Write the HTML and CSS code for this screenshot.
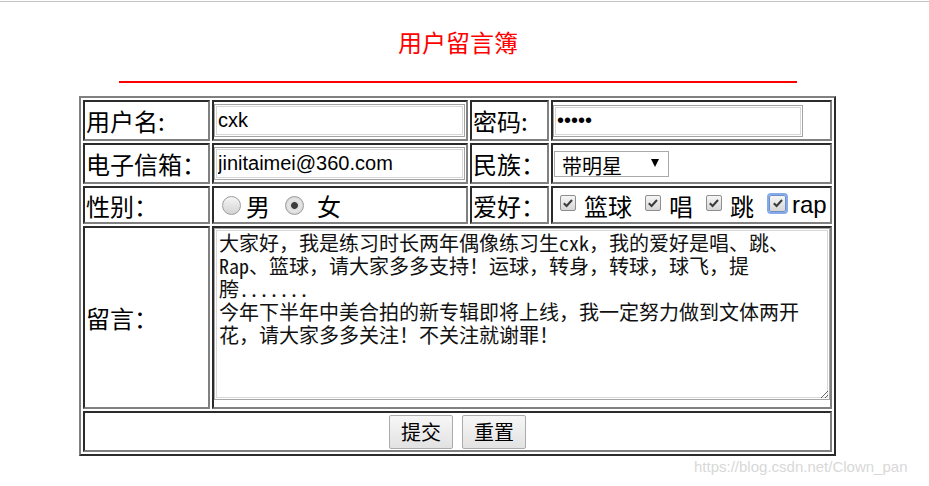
FILE: index.html
```html
<!DOCTYPE html>
<html lang="zh-CN">
<head>
<meta charset="utf-8">
<title>用户留言簿</title>
<link rel="stylesheet" href="styles.css">
</head>
<body>
<div class="topbar"></div>
<div class="page">
  <h1 class="title">用户留言簿</h1>
  <div class="rule"></div>
  <form class="board">
    <div class="cell label">用户名:</div>
    <div class="cell field"><input class="text" type="text" value="cxk"></div>
    <div class="cell label">密码:</div>
    <div class="cell field"><input class="text pwd" type="password" value="12345"></div>

    <div class="cell label">电子信箱：</div>
    <div class="cell field"><input class="text" type="text" value="jinitaimei@360.com"></div>
    <div class="cell label">民族：</div>
    <div class="cell field">
      <div class="select"><span class="select-text">带明星</span><span class="arrow"></span></div>
    </div>

    <div class="cell label">性别：</div>
    <div class="cell field opts">
      <span class="radio"></span><span class="opt-text r1">男</span>
      <span class="radio on r2"></span><span class="opt-text r2t">女</span>
    </div>
    <div class="cell label">爱好：</div>
    <div class="cell field opts">
      <span class="cb first"><svg viewBox="0 0 16 16" width="16" height="16"><path d="M3.8 8.2 6.6 11 12 5" fill="none" stroke="#3a3a3a" stroke-width="2"/></svg></span><span class="opt-text">篮球</span>
      <span class="cb"><svg viewBox="0 0 16 16" width="16" height="16"><path d="M3.8 8.2 6.6 11 12 5" fill="none" stroke="#3a3a3a" stroke-width="2"/></svg></span><span class="opt-text">唱</span>
      <span class="cb"><svg viewBox="0 0 16 16" width="16" height="16"><path d="M3.8 8.2 6.6 11 12 5" fill="none" stroke="#3a3a3a" stroke-width="2"/></svg></span><span class="opt-text">跳</span>
      <span class="cb focus"><svg viewBox="0 0 16 16" width="16" height="16"><path d="M3.8 8.2 6.6 11 12 5" fill="none" stroke="#3a3a3a" stroke-width="2"/></svg></span><span class="opt-text rap">rap</span>
    </div>

    <div class="cell label">留言：</div>
    <div class="cell field wide"><textarea class="message" readonly>大家好，我是练习时长两年偶像练习生cxk，我的爱好是唱、跳、
Rap、篮球，请大家多多支持！运球，转身，转球，球飞，提
胯.......
今年下半年中美合拍的新专辑即将上线，我一定努力做到文体两开
花，请大家多多关注！不关注就谢罪！</textarea></div>

    <div class="cell actions">
      <button class="btn" type="button">提交</button>
      <button class="btn" type="button">重置</button>
    </div>
  </form>
</div>
<div class="watermark">https://blog.csdn.net/Clown_pan</div>
</body>
</html>
```
FILE: styles.css
```css
* { box-sizing: border-box; }
html, body { margin: 0; padding: 0; background: #fff; }
body {
  font-family: "Noto Sans CJK SC", sans-serif;
  color: #000;
  position: relative;
  min-height: 486px;
}
.topbar { height: 1px; margin-top: 1px; background: #c3c3c3; }
.page { width: 916px; }
.title {
  margin: 25px 0 0;
  font-size: 24px;
  font-weight: normal;
  line-height: 30px;
  color: #f00;
  text-align: center;
}
.rule {
  width: 678px;
  height: 2px;
  margin: 24px auto 0;
  background: #f00;
}
.board {
  margin: 13px 0 0 79px;
  width: 757px;
  display: grid;
  grid-template-columns: 127px 256px 79px 281px;
  grid-template-rows: 41px 41px 38px 183px 41px;
  gap: 2px;
  padding: 2px;
  border: 2px solid;
  border-color: #808080 #2b2b2b #2b2b2b #808080;
}
.cell {
  border: 2px solid;
  border-color: #2b2b2b #808080 #808080 #2b2b2b;
  display: flex;
  align-items: center;
  min-width: 0;
}
.label {
  padding-left: 1px;
  font-size: 24px;
  white-space: nowrap;
}
.text {
  width: 251px;
  height: 33px;
  margin: 0;
  padding: 0 3px;
  border: 1px solid #a3a3a3;
  box-shadow: inset 0 0 0 1px #fff, inset 0 0 0 2px #d6d6d6;
  font-family: "Liberation Sans", Arial, sans-serif;
  font-size: 20px;
  color: #000;
  background: #fff;
  outline: none;
}
.pwd { width: 250px; height: 32px; }
.select {
  margin-left: 1px;
  width: 115px;
  height: 26px;
  border: 1px solid #a9a9a9;
  display: flex;
  align-items: center;
  justify-content: space-between;
  padding: 0 9px 0 7px;
}
.select-text { font-size: 20px; line-height: 24px; padding-top: 4px; }
.arrow {
  width: 0;
  height: 0;
  border-left: 4px solid transparent;
  border-right: 4px solid transparent;
  border-top: 8px solid #000;
  margin-top: -1px;
}
.opts { font-size: 24px; white-space: nowrap; }
.radio {
  flex: none;
  width: 19px;
  height: 19px;
  margin-left: 8px;
  border-radius: 50%;
  border: 1px solid #9b9b9b;
  background: linear-gradient(#f5f5f5, #d3d3d3);
  margin-top: 1px;
}
.radio.on {
  background: radial-gradient(circle, #3c3c3c 0 3px, #d9d9d9 3.8px, #e6e6e6 6px, #d4d4d4 9px);
}
.r1 { margin-left: 5px; }
.r2 { margin-left: 15px; }
.r2t { margin-left: 13px; }
.cb {
  flex: none;
  width: 16px;
  height: 16px;
  margin-left: 13px;
  border: 1px solid #8e8e8e;
  border-radius: 2px;
  background: linear-gradient(#f6f6f6, #d6d6d6);
  display: flex;
  align-items: center;
  justify-content: center;
  margin-top: -4px;
}
.cb svg { display: block; margin: -1px; flex: none; }
.cb.first { margin-left: 7px; }
.cb + .opt-text { margin-left: 8px; }
.cb.focus {
  margin-left: 15px;
  width: 17px;
  height: 17px;
  box-shadow: 0 0 0 2px #83aaea;
  border-color: #6f8fc4;
}
.cb.focus + .opt-text { margin-left: 6px; }
.rap { font-family: "Liberation Sans", Arial, sans-serif; }
.wide { grid-column: 2 / 5; align-items: flex-start; }
.message {
  display: block;
  width: 616px;
  height: 172px;
  margin: 0;
  padding: 2px 4px;
  border: 1px solid #a6a6a6;
  box-shadow: inset 0 0 0 1px #fff, inset 0 0 0 2px #d8d8d8;
  font-family: "Noto Sans Mono CJK SC", "Noto Sans CJK SC", monospace;
  font-size: 20px;
  line-height: 23px;
  color: #111;
  white-space: pre;
  overflow: hidden;
  resize: both;
  outline: none;
}
.actions {
  grid-column: 1 / 5;
  justify-content: center;
  gap: 9px;
}
.btn {
  height: 34px;
  margin: 0;
  padding: 0 11px;
  font-family: "Noto Sans CJK SC", sans-serif;
  font-size: 20px;
  line-height: 30px;
  color: #000;
  border: 1px solid #ababab;
  border-radius: 2px;
  background: linear-gradient(#f7f7f7, #e2e2e2);
}
.watermark {
  position: absolute;
  left: 694px;
  top: 458px;
  font-family: "Liberation Sans", Arial, sans-serif;
  font-size: 15px;
  line-height: 17px;
  color: #d8d8d8;
  white-space: nowrap;
}
```
